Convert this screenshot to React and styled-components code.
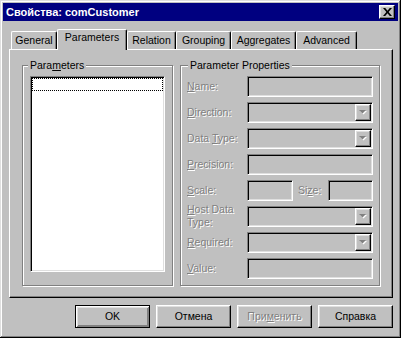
import React from "react";
import styled, { createGlobalStyle } from "styled-components";

const GlobalStyle = createGlobalStyle`
  html, body {
    margin: 0;
    padding: 0;
    background: #c0c0c0;
  }
  body {
    font-family: "Liberation Sans", Arial, sans-serif;
    font-size: 10.5px;
    line-height: 13px;
  }
`;

const raised = `
  border-top: 1px solid #fff;
  border-left: 1px solid #fff;
  border-right: 1px solid #000;
  border-bottom: 1px solid #000;
  box-shadow: inset -1px -1px #808080, inset 1px 1px #dfdfdf;
`;

const sunken = `
  border-top: 1px solid #808080;
  border-left: 1px solid #808080;
  border-right: 1px solid #fff;
  border-bottom: 1px solid #fff;
  box-shadow: inset 1px 1px #000, inset -1px -1px #dfdfdf;
`;

const Window = styled.div`
  box-sizing: border-box;
  width: 401px;
  height: 338px;
  padding: 3px;
  background: #c0c0c0;
  box-shadow: inset -1px -1px #000, inset 1px 1px #dfdfdf,
    inset -2px -2px #808080, inset 2px 2px #fff;
  display: flex;
  flex-direction: column;
`;

const TitleBar = styled.div`
  height: 18px;
  flex-shrink: 0;
  background: #000080;
  color: #fff;
  font-size: 11px;
  font-weight: bold;
  display: flex;
  align-items: center;
  justify-content: space-between;
  padding: 0 3px 0 3px;
`;

const CloseButton = styled.div`
  box-sizing: border-box;
  width: 16px;
  height: 14px;
  background: #c0c0c0;
  ${raised}
  display: flex;
  align-items: center;
  justify-content: center;
`;

const Body = styled.div`
  padding: 8px 0 0 6px;
  display: flex;
  flex-direction: column;
`;

const TabRow = styled.div`
  height: 20px;
  display: flex;
  align-items: flex-end;
  padding-left: 2px;
`;

const Tab = styled.div`
  box-sizing: border-box;
  width: ${(p) => p.$w}px;
  height: ${(p) => (p.$active ? 21 : 18)}px;
  margin-bottom: ${(p) => (p.$active ? -1 : 0)}px;
  position: relative;
  z-index: ${(p) => (p.$active ? 1 : 0)};
  background: #c0c0c0;
  border-top: 1px solid #fff;
  border-left: 1px solid #fff;
  border-right: 1px solid #000;
  box-shadow: inset -1px 0 #808080;
  border-top-left-radius: 2px;
  border-top-right-radius: 2px;
  display: flex;
  justify-content: center;
  align-items: flex-start;
  padding-top: ${(p) => (p.$active ? 1 : 2)}px;
  color: #000;
  white-space: nowrap;
`;

const Panel = styled.div`
  box-sizing: border-box;
  width: 384px;
  height: 249px;
  background: #c0c0c0;
  border-top: 1px solid #fff;
  border-left: 1px solid #fff;
  border-right: 1px solid #000;
  border-bottom: 1px solid #000;
  box-shadow: inset -1px -1px #808080;
  display: flex;
  align-items: flex-start;
  gap: 7px;
  padding: 15px 0 0 12px;
`;

const Group = styled.div`
  box-sizing: border-box;
  position: relative;
  width: ${(p) => p.$w}px;
  height: 221px;
  border: 1px solid #808080;
  box-shadow: inset 1px 1px #fff, 1px 1px #fff;
  padding: ${(p) => p.$pad};
`;

const Caption = styled.span`
  position: absolute;
  top: -7px;
  left: ${(p) => p.$left}px;
  padding: 0 2px;
  background: #c0c0c0;
  color: #000;
  white-space: nowrap;
`;

const ListBox = styled.div`
  box-sizing: border-box;
  width: 135px;
  height: 196px;
  background: #fff;
  ${sunken}
  padding: 1px;
`;

const FocusItem = styled.div`
  height: 13px;
  border: 1px dotted #000;
  box-sizing: border-box;
`;

const Form = styled.div`
  display: flex;
  flex-direction: column;
  gap: 5px;
`;

const Row = styled.div`
  height: 21px;
  display: flex;
  align-items: center;
`;

const Label = styled.span`
  width: ${(p) => p.$w || 60}px;
  flex-shrink: 0;
  margin-left: ${(p) => p.$ml || 0}px;
  align-self: ${(p) => (p.$top ? "flex-start" : "center")};
  margin-top: ${(p) => (p.$top ? -3 : 0)}px;
  color: #808080;
  text-shadow: 1px 1px 0 #fff;
  white-space: nowrap;
  u {
    text-decoration: underline;
  }
`;

const Field = styled.div`
  box-sizing: border-box;
  width: ${(p) => p.$w || 126}px;
  height: 21px;
  background: #c0c0c0;
  ${sunken}
  display: flex;
  justify-content: flex-end;
  padding: 1px;
`;

const DropButton = styled.div`
  box-sizing: border-box;
  width: 16px;
  height: 17px;
  background: #c0c0c0;
  ${raised}
  display: flex;
  align-items: center;
  justify-content: center;
`;

const ButtonRow = styled.div`
  width: 384px;
  margin-top: 7px;
  display: flex;
  justify-content: flex-end;
  gap: 6px;
`;

const Button = styled.div`
  box-sizing: border-box;
  width: 75px;
  height: 23px;
  background: #c0c0c0;
  ${(p) =>
    p.$default
      ? `border: 1px solid #000;
         box-shadow: inset 1px 1px #fff, inset -1px -1px #808080, inset 2px 2px #dfdfdf, inset -2px -2px #808080;`
      : raised}
  display: flex;
  align-items: center;
  justify-content: center;
  color: ${(p) => (p.$disabled ? "#808080" : "#000")};
  text-shadow: ${(p) => (p.$disabled ? "1px 1px 0 #fff" : "none")};
`;

const Arrow = () => (
  <svg width="8" height="5" viewBox="0 0 8 5">
    <path d="M1 1h7L4.5 4.5z" fill="#fff" />
    <path d="M0 0h7L3.5 3.5z" fill="#808080" />
  </svg>
);

const tabs = [
  { name: "General", w: 46 },
  { name: "Parameters", w: 70, active: true },
  { name: "Relation", w: 49 },
  { name: "Grouping", w: 55 },
  { name: "Aggregates", w: 65 },
  { name: "Advanced", w: 61 },
];

function App() {
  return (
    <>
      <GlobalStyle />
      <Window>
        <TitleBar>
          <span>Свойства: comCustomer</span>
          <CloseButton>
            <svg width="9" height="8" viewBox="0 0 9 8">
              <path d="M0 0h2.2l2.3 2.8L6.8 0H9L5.6 4 9 8H6.8L4.5 5.2 2.2 8H0l3.4-4z" fill="#000" />
            </svg>
          </CloseButton>
        </TitleBar>
        <Body>
          <TabRow>
            {tabs.map((t) => (
              <Tab key={t.name} $w={t.w} $active={t.active}>
                {t.name}
              </Tab>
            ))}
          </TabRow>
          <Panel>
            <Group $w={151} $pad="10px 0 0 7px">
              <Caption $left={5}>
                Para<u>m</u>eters
              </Caption>
              <ListBox>
                <FocusItem />
              </ListBox>
            </Group>
            <Group $w={200} $pad="10px 0 0 6px">
              <Caption $left={7}>Parameter Properties</Caption>
              <Form>
                <Row>
                  <Label><u>N</u>ame:</Label>
                  <Field />
                </Row>
                <Row>
                  <Label><u>D</u>irection:</Label>
                  <Field>
                    <DropButton><Arrow /></DropButton>
                  </Field>
                </Row>
                <Row>
                  <Label>Data <u>T</u>ype:</Label>
                  <Field>
                    <DropButton><Arrow /></DropButton>
                  </Field>
                </Row>
                <Row>
                  <Label><u>P</u>recision:</Label>
                  <Field />
                </Row>
                <Row>
                  <Label><u>S</u>cale:</Label>
                  <Field $w={46} />
                  <Label $w={30} $ml={5}>Si<u>z</u>e:</Label>
                  <Field $w={45} />
                </Row>
                <Row>
                  <Label $top>
                    <u>H</u>ost Data
                    <br />
                    Type:
                  </Label>
                  <Field>
                    <DropButton><Arrow /></DropButton>
                  </Field>
                </Row>
                <Row>
                  <Label><u>R</u>equired:</Label>
                  <Field>
                    <DropButton><Arrow /></DropButton>
                  </Field>
                </Row>
                <Row>
                  <Label><u>V</u>alue:</Label>
                  <Field />
                </Row>
              </Form>
            </Group>
          </Panel>
          <ButtonRow>
            <Button $default>OK</Button>
            <Button>Отмена</Button>
            <Button $disabled>
              При<u>м</u>енить
            </Button>
            <Button>Справка</Button>
          </ButtonRow>
        </Body>
      </Window>
    </>
  );
}

export default App;
